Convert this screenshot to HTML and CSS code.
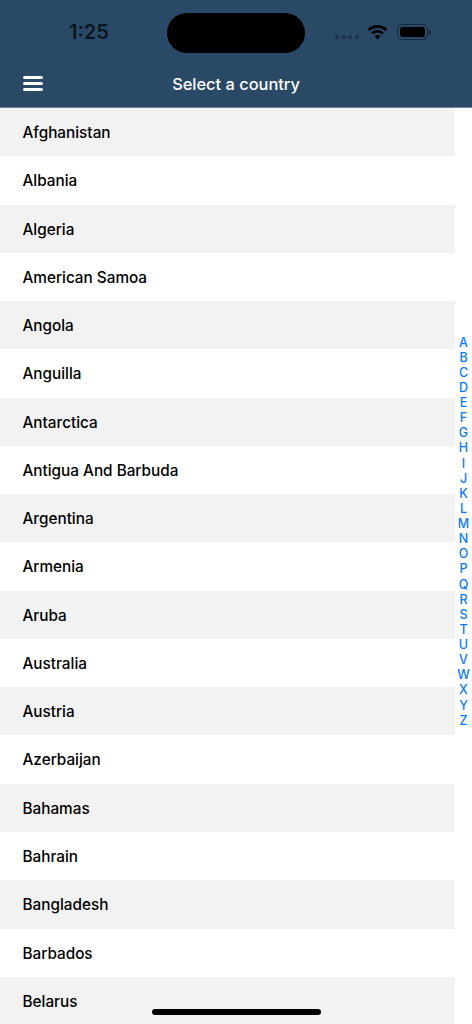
FILE: index.html
```html
<!DOCTYPE html>
<html lang="en">
<head>
  <meta charset="UTF-8">
  <meta name="viewport" content="width=device-width, initial-scale=1.0">
  <title>Select a country</title>
  <link rel="stylesheet" href="styles.css">
</head>
<body>
  <header class="header">
    <div class="status-bar">
      <span class="time">1:25</span>
      <div class="island"></div>
      <div class="status-icons">
        <div class="signal"><i></i><i></i><i></i><i></i></div>
        <svg class="wifi" width="21" height="15" viewBox="0 0 21 15">
          <path d="M10.5 3c3 0 5.800 1.100 7.900 3.100l1.800-2C17.600 1.500 14.200 0 10.500 0S3.400 1.500.8 4.100l1.800 2C4.700 4.100 7.500 3 10.500 3z"/>
          <path d="M10.500 7.800c1.700 0 3.300.6 4.500 1.800l1.800-2c-1.700-1.600-3.900-2.600-6.300-2.600s-4.600 1-6.300 2.600l1.800 2c1.200-1.200 2.800-1.800 4.500-1.800z"/>
          <path d="M10.500 10c-1.100 0-2.100.4-2.900 1.100l2.900 3.400 2.900-3.400c-.8-.7-1.800-1.100-2.900-1.100z"/>
        </svg>
        <div class="battery"><div class="battery-level"></div></div>
        <div class="battery-cap"></div>
      </div>
    </div>
    <div class="nav-bar">
      <button class="menu-btn" aria-label="Menu"><span></span><span></span><span></span></button>
      <h1 class="title">Select a country</h1>
    </div>
  </header>

  <main class="content">
    <ul class="country-list">
      <li>Afghanistan</li>
      <li>Albania</li>
      <li>Algeria</li>
      <li>American Samoa</li>
      <li>Angola</li>
      <li>Anguilla</li>
      <li>Antarctica</li>
      <li>Antigua And Barbuda</li>
      <li>Argentina</li>
      <li>Armenia</li>
      <li>Aruba</li>
      <li>Australia</li>
      <li>Austria</li>
      <li>Azerbaijan</li>
      <li>Bahamas</li>
      <li>Bahrain</li>
      <li>Bangladesh</li>
      <li>Barbados</li>
      <li>Belarus</li>
    </ul>
    <nav class="alpha-index">
      <a>A</a><a>B</a><a>C</a><a>D</a><a>E</a><a>F</a><a>G</a><a>H</a><a>I</a><a>J</a><a>K</a><a>L</a><a>M</a>
      <a>N</a><a>O</a><a>P</a><a>Q</a><a>R</a><a>S</a><a>T</a><a>U</a><a>V</a><a>W</a><a>X</a><a>Y</a><a>Z</a>
    </nav>
  </main>

  <div class="home-indicator"></div>
</body>
</html>
```

FILE: styles.css
```css
* {
  box-sizing: border-box;
}

html,
body {
  height: 100%;
}

body {
  margin: 0;
  height: 1024px;
  display: flex;
  flex-direction: column;
  overflow: hidden;
  position: relative;
  font-family: Inter, "Noto Sans", sans-serif;
  background-color: #fff;
}

.header {
  height: 108px;
  flex-shrink: 0;
  background-color: #294966;
  border-bottom: 1px solid #6d8296;
}

.status-bar {
  height: 64px;
  padding-top: 13px;
  display: flex;
  align-items: flex-start;
}

.time {
  width: 167px;
  padding-left: 69px;
  padding-top: 7px;
  font-size: 20px;
  line-height: 24px;
  font-weight: 600;
  color: #0b1520;
}

.island {
  width: 138px;
  height: 40px;
  border-radius: 20px;
  background-color: #000;
}

.status-icons {
  display: flex;
  align-items: center;
  height: 38px;
  padding-left: 30px;
}

.signal {
  display: flex;
  gap: 2.500px;
  margin-top: 10px;
}

.signal i {
  width: 4px;
  height: 4px;
  border-radius: 50%;
  background-color: #1b3145;
}

.wifi {
  margin-left: 8.500px;
}

.battery {
  width: 31px;
  height: 15.500px;
  margin-left: 9px;
  padding: 2px;
  border: 1px solid #16293b;
  border-radius: 5px;
}

.battery-level {
  height: 100%;
  border-radius: 3px;
  background-color: #000;
}

.battery-cap {
  width: 2px;
  height: 5px;
  margin-left: 1px;
  border-radius: 0 2px 2px 0;
  background-color: #16293b;
}

.nav-bar {
  height: 43px;
  padding-bottom: 4px;
  display: flex;
  align-items: center;
  justify-content: center;
  position: relative;
}

.menu-btn {
  position: absolute;
  left: 23px;
  top: 12px;
  width: 20px;
  padding: 0;
  border: none;
  background: none;
  display: flex;
  flex-direction: column;
  gap: 3px;
}

.menu-btn span {
  height: 3px;
  border-radius: 2px;
  background-color: #fff;
}

.title {
  margin: 0;
  font-size: 16.400px;
  line-height: 24px;
  font-weight: 500;
  color: #fff;
}

.content {
  flex: 1;
  min-height: 0;
  display: flex;
  overflow: hidden;
}

.country-list {
  width: 455px;
  flex-shrink: 0;
  margin: 0;
  padding: 0;
  list-style: none;
}

.country-list li {
  height: 48.280px;
  padding-left: 22.500px;
  padding-top: 0.800px;
  display: flex;
  align-items: center;
  font-size: 15.300px;
  font-weight: 500;
  color: #000;
  background-color: #fff;
}

.country-list li:nth-child(odd) {
  background-color: #f2f2f2;
}

.alpha-index {
  flex: 1;
  padding-top: 226.500px;
  display: flex;
  flex-direction: column;
  align-items: center;
}

.alpha-index a {
  height: 15.140px;
  font-size: 12.500px;
  line-height: 15px;
  font-weight: 500;
  color: #0a7aff;
}

.home-indicator {
  position: absolute;
  left: 152px;
  bottom: 9px;
  width: 169px;
  height: 6px;
  border-radius: 3px;
  background-color: #000;
}
```
